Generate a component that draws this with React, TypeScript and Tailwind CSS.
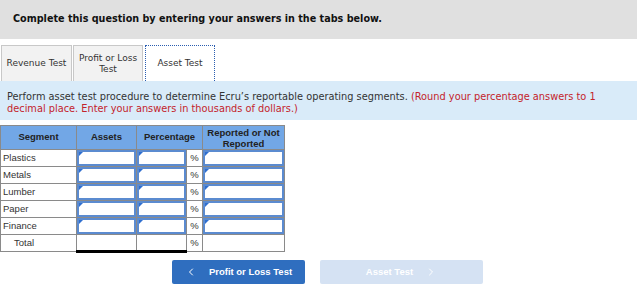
import { ChevronLeft, ChevronRight } from "lucide-react";

const rows = ["Plastics", "Metals", "Lumber", "Paper", "Finance"];

const Input = () => (
  <div className="relative h-full w-full border-2 border-[#5b8bd0] bg-white">
    <span className="absolute left-0 top-0 h-0 w-0 border-l-[2px] border-t-[2px] border-l-[#2f6fd0] border-t-[#2f6fd0] border-r-[2px] border-b-[2px] border-r-transparent border-b-transparent" />
  </div>
);

export default function App() {
  return (
    <div className="h-[304px] w-[637px] bg-white font-['DejaVu_Sans',sans-serif] text-[#222]">
      <div className="flex h-[39px] items-center bg-[#e0e0e0] pl-[13px] text-[9.65px] font-bold text-[#111]">
        Complete this question by entering your answers in the tabs below.
      </div>

      <div className="mt-[6px] flex h-[36px] pl-[1px] text-[9px] text-[#333]">
        <div className="flex w-[71px] items-center justify-center border border-b-0 border-[#c8c8c8] bg-[#f2f2f2]">
          Revenue Test
        </div>
        <div className="ml-[1px] flex w-[70px] items-center justify-center border border-b-0 border-[#c8c8c8] bg-[#f2f2f2] text-center leading-[11px]">
          Profit or Loss
          <br />
          Test
        </div>
        <div className="ml-[2px] flex w-[70px] items-center justify-center border border-b-0 border-dotted border-[#2a5db0] bg-white">
          Asset Test
        </div>
      </div>

      <div className="h-[39px] bg-[#d9ebf9] px-[7px] pt-[10px] text-[9.8px] leading-[12px] text-[#333]">
        Perform asset test procedure to determine Ecru’s reportable operating segments.{" "}
        <span className="text-[#c4232b]">
          (Round your percentage answers to 1 decimal place. Enter your answers in thousands of dollars.)
        </span>
      </div>

      <table className="mt-[5px] border-collapse font-['Liberation_Sans',Arial,sans-serif] text-[9.5px] text-[#333]">
        <thead>
          <tr className="h-[24px] bg-[#72a7e6] font-bold text-[#222]">
            <th className="w-[76px] border border-[#8a8a8a] p-0">Segment</th>
            <th className="w-[60px] border border-[#8a8a8a] p-0">Assets</th>
            <th colSpan={2} className="w-[66px] border border-[#8a8a8a] p-0">
              Percentage
            </th>
            <th className="w-[82px] border border-[#8a8a8a] p-0 leading-[11px]">
              Reported or Not
              <br />
              Reported
            </th>
          </tr>
        </thead>
        <tbody>
          {rows.map((r) => (
            <tr key={r} className="h-[17px]">
              <td className="border border-[#8a8a8a] pl-[2px]">{r}</td>
              <td className="h-[17px] border border-[#8a8a8a] p-0">
                <Input />
              </td>
              <td className="h-[17px] w-[50px] border border-[#8a8a8a] p-0">
                <Input />
              </td>
              <td className="w-[16px] border border-[#8a8a8a] p-0 text-center">%</td>
              <td className="h-[17px] border border-[#8a8a8a] p-0">
                <Input />
              </td>
            </tr>
          ))}
          <tr className="h-[17px]">
            <td className="border border-[#8a8a8a] pl-[13px]">Total</td>
            <td className="border border-b-[3px] border-[#8a8a8a] border-t-black border-b-black p-0" />
            <td className="border border-b-[3px] border-[#8a8a8a] border-t-black border-b-black p-0" />
            <td className="border border-[#8a8a8a] border-t-black p-0 text-center">%</td>
            <td className="border border-[#8a8a8a] p-0" />
          </tr>
        </tbody>
      </table>

      <div className="mt-[7px] flex gap-[15px] pl-[172px] font-['Liberation_Sans',Arial,sans-serif] text-[9.5px] font-bold text-white">
        <button className="flex h-[24px] w-[133px] items-center justify-center gap-[12px] rounded-[2px] bg-[#2f6ebf]">
          <ChevronLeft className="h-[12px] w-[12px]" strokeWidth={2} />
          Profit or Loss Test
        </button>
        <button className="flex h-[24px] w-[163px] items-center justify-center gap-[12px] rounded-[2px] bg-[#d5e2f3]">
          Asset Test
          <ChevronRight className="h-[12px] w-[12px]" strokeWidth={2} />
        </button>
      </div>
    </div>
  );
}
